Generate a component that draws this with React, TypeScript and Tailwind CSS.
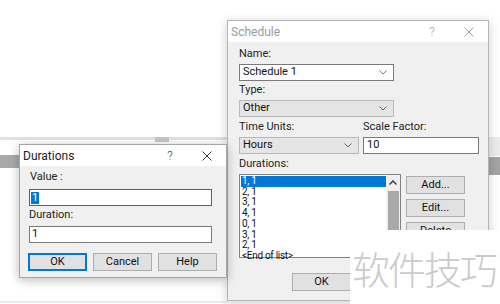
const ui = { fontFamily: "Roboto, 'Liberation Sans', Arial, sans-serif" };

const Chevron = ({ color = "#555" }: { color?: string }) => (
  <svg width="8" height="5" viewBox="0 0 8 5" className="shrink-0">
    <polyline points="0.5,0.5 4,4 7.5,0.5" fill="none" stroke={color} strokeWidth="1" />
  </svg>
);

const CloseX = ({ color }: { color: string }) => (
  <svg width="10" height="10" viewBox="0 0 10 10">
    <path d="M0.5 0.5 L9.5 9.5 M9.5 0.5 L0.5 9.5" stroke={color} strokeWidth="1" />
  </svg>
);

const TitleBar = ({ title, active }: { title: string; active: boolean }) => {
  const c = active ? "#222" : "#9a9a9a";
  return (
    <div className="flex h-[21px] items-center bg-white">
      <span className="pl-[3px] text-[12px]" style={{ color: c }}>
        {title}
      </span>
      <div className="flex-1" />
      <div className="flex w-[36px] justify-center text-[12px] font-light" style={{ color: active ? "#444" : "#a0a0a0" }}>
        ?
      </div>
      <div className="flex w-[38px] justify-center">
        <CloseX color={active ? "#333" : "#a0a0a0"} />
      </div>
    </div>
  );
};

const Button = ({ label, isDefault, className = "" }: { label: string; isDefault?: boolean; className?: string }) => (
  <div
    className={`flex h-[18px] w-[59px] items-center justify-center text-[11px] text-[#111] bg-[#e1e1e1] ${
      isDefault ? "border-2 border-[#0078d7]" : "border border-[#adadad]"
    } ${className}`}
  >
    {label}
  </div>
);

const Combo = ({ value, gray, width }: { value: string; gray?: boolean; width: string }) => (
  <div
    className={`flex h-[17px] items-center justify-between pl-[3px] pr-[6px] text-[11px] text-[#111] ${width} ${
      gray ? "bg-[#e5e5e5] border border-[#b9b9b9]" : "bg-white border border-[#7a7a7a]"
    }`}
  >
    <span>{value}</span>
    <Chevron color={gray ? "#666" : "#777"} />
  </div>
);

const durations = ["2, 1", "3, 1", "4, 1", "0, 1", "3, 1", "2, 1", "<End of list>"];

function DurationsDialog() {
  return (
    <div className="absolute left-[19px] top-[144px] flex h-[134px] w-[208px] flex-col border border-[#a6a6a6] bg-[#f0f0f0] shadow-[0_2px_10px_rgba(0,0,0,0.28)]">
      <TitleBar title="Durations" active />
      <div className="flex flex-col pl-[9px] pt-[4px]">
        <div className="h-[14px] pl-[1px] text-[11px] leading-[14px] text-[#222]">Value :</div>
        <div className="mt-[5px] flex h-[17px] w-[183px] items-center border border-[#0078d7] bg-white pl-[1px]">
          <span className="bg-[#0078d7] px-[1px] text-[11px] leading-[12px] text-white">1</span>
        </div>
        <div className="mt-[2px] h-[14px] text-[11px] leading-[14px] text-[#222]">Duration:</div>
        <div className="mt-[4px] flex h-[17px] w-[183px] items-center border border-[#7a7a7a] bg-white pl-[2px] text-[11px] text-[#111]">
          1
        </div>
        <div className="-ml-[1px] mt-[10px] flex gap-[6px]">
          <Button label="OK" isDefault />
          <Button label="Cancel" />
          <Button label="Help" />
        </div>
      </div>
    </div>
  );
}

function ScheduleDialog() {
  return (
    <div className="absolute left-[227px] top-[20px] flex h-[281px] w-[262px] flex-col border border-[#b5b5b5] bg-[#f0f0f0] shadow-[0_2px_10px_rgba(0,0,0,0.2)]">
      <TitleBar title="Schedule" active={false} />
      <div className="flex flex-col pl-[11px] pt-[5px] text-[#222]">
        <div className="h-[14px] text-[11px] leading-[14px]">Name:</div>
        <div className="mt-[3px]">
          <Combo value="Schedule 1" width="w-[155px]" />
        </div>
        <div className="mt-[2px] h-[14px] text-[11px] leading-[14px]">Type:</div>
        <div className="mt-[3px]">
          <Combo value="Other" gray width="w-[155px]" />
        </div>
        <div className="mt-[3px] flex gap-[4px]">
          <div className="flex w-[120px] flex-col">
            <div className="h-[14px] text-[11px] leading-[14px]">Time Units:</div>
            <div className="mt-[3px]">
              <Combo value="Hours" gray width="w-[120px]" />
            </div>
          </div>
          <div className="flex w-[116px] flex-col">
            <div className="h-[14px] text-[11px] leading-[14px]">Scale Factor:</div>
            <div className="mt-[3px] flex h-[17px] items-center border border-[#7a7a7a] bg-white pl-[3px] text-[11px] text-[#111]">
              10
            </div>
          </div>
        </div>
        <div className="mt-[3px] h-[14px] text-[11px] leading-[14px]">Durations:</div>
        <div className="mt-[3px] flex">
          <div className="flex h-[84px] w-[162px] border border-[#828282] bg-white">
            <div className="flex flex-1 flex-col pl-[1px] pt-[1px] text-[10px] leading-[10.7px] tracking-[-0.3px] text-[#111]">
              <div className="bg-[#0078d7] pl-[1px] text-white">1, 1</div>
              {durations.map((d, i) => (
                <div key={i} className="pl-[1px]">
                  {d}
                </div>
              ))}
            </div>
            <div className="flex w-[14px] flex-col items-center bg-[#f0f0f0]">
              <svg width="8" height="5" viewBox="0 0 8 5" className="mt-[5px]">
                <polyline points="0.5,4.5 4,1 7.5,4.5" fill="none" stroke="#333" strokeWidth="1.4" />
              </svg>
              <div className="mt-[6px] w-[11px] flex-1 bg-[#a8a8a8]" />
            </div>
          </div>
          <div className="ml-[5px] mt-[2px] flex flex-col gap-[5px]">
            <Button label="Add..." />
            <Button label="Edit..." />
            <Button label="Delete" />
          </div>
        </div>
        <div className="ml-[53px] mt-[15px] flex">
          <Button label="OK" className="w-[58px]" />
        </div>
      </div>
    </div>
  );
}

export default function App() {
  return (
    <div className="relative h-[304px] w-[500px] overflow-hidden bg-white" style={ui}>
      {/* desktop strips behind the dialogs */}
      <div className="absolute left-0 top-[137px] h-[3px] w-[228px] bg-[#e2e2e2]" />
      <div className="absolute left-[155px] top-[137px] h-[5px] w-[14px] bg-[#c6c6c6]" />
      <div className="absolute left-0 top-[155px] h-[13px] w-[228px] bg-[#a9a9a9]" />
      <div className="absolute left-0 top-[301px] h-[2px] w-[228px] bg-[#ececec]" />
      <div className="absolute left-[489px] top-[137px] h-[19px] w-[11px] bg-[#ececec]" />
      <div className="absolute left-[489px] top-[157px] h-[18px] w-[11px] bg-[#a4a4a4]" />

      <ScheduleDialog />
      <DurationsDialog />

      {/* watermark */}
      <div className="absolute left-[350px] top-[230px] flex h-[74px] w-[150px] items-center bg-white pl-[2px]">
        <span
          className="text-[38px] font-light tracking-[-2px] text-[#cacaca]"
          style={{ fontFamily: "'Noto Sans CJK SC', 'Noto Sans CJK TC', sans-serif" }}
        >
          软件技巧
        </span>
      </div>
    </div>
  );
}
